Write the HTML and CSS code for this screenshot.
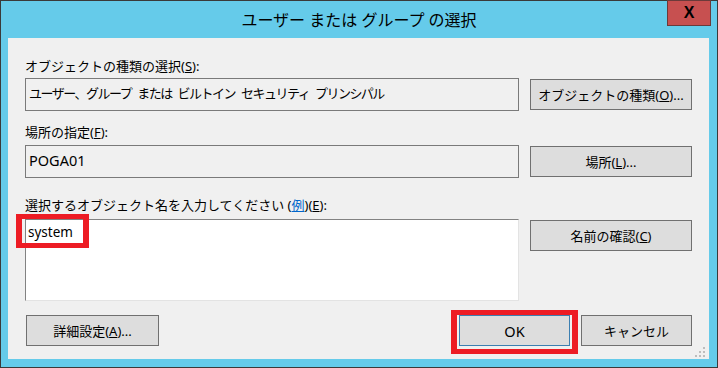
FILE: index.html
```html
<!DOCTYPE html>
<html lang="ja">
<head>
  <meta charset="UTF-8" />
  <title>ユーザー または グループ の選択</title>
  <link rel="stylesheet" href="styles.css">
</head>
<body>
  <div class="window">
    <div class="titlebar">
      <span></span>
      <span class="title">ユーザー または グループ の選択</span>
      <button class="close">X</button>
    </div>

    <div class="content">
      <label class="field-label">オブジェクトの種類の選択(<u>S</u>):</label>
      <div class="row">
        <div class="box box-kana">ユーザー、グループ または ビルトイン セキュリティ プリンシパル</div>
        <button class="btn">オブジェクトの種類(<u>O</u>)...</button>
      </div>

      <label class="field-label second">場所の指定(<u>F</u>):</label>
      <div class="row">
        <div class="box box-latin">POGA01</div>
        <button class="btn">場所(<u>L</u>)...</button>
      </div>

      <label class="field-label third">選択するオブジェクト名を入力してください (<a class="example">例</a>)(<u>E</u>):</label>
      <div class="row row-top">
        <div class="names">
          system
          <span class="mark mark-names"></span>
        </div>
        <button class="btn btn-check">名前の確認(<u>C</u>)</button>
      </div>

      <div class="actions">
        <button class="btn btn-advanced">詳細設定(<u>A</u>)...</button>
        <button class="btn btn-ok">OK<span class="mark mark-ok"></span></button>
        <button class="btn btn-cancel">キャンセル</button>
      </div>

      <svg class="grip" width="10" height="10" viewBox="0 0 10 10">
        <rect x="8" y="0" width="2" height="2" fill="#bdbdbd"/>
        <rect x="4" y="4" width="2" height="2" fill="#bdbdbd"/>
        <rect x="8" y="4" width="2" height="2" fill="#bdbdbd"/>
        <rect x="0" y="8" width="2" height="2" fill="#bdbdbd"/>
        <rect x="4" y="8" width="2" height="2" fill="#bdbdbd"/>
        <rect x="8" y="8" width="2" height="2" fill="#bdbdbd"/>
      </svg>
    </div>
  </div>
</body>
</html>
```

FILE: styles.css
```css
* {
  box-sizing: border-box;
}
body {
  margin: 0;
  font-family: "Noto Sans", "Noto Sans CJK JP", sans-serif;
  font-size: 13px;
  color: #000;
}
.window {
  width: 718px;
  height: 368px;
  border: 1px solid #3a3a3a;
  background: #65cbea;
  display: flex;
  flex-direction: column;
}
.titlebar {
  height: 37px;
  display: grid;
  grid-template-columns: 1fr auto 1fr;
}
.title {
  font-size: 16px;
  line-height: 39px;
  white-space: nowrap;
}
.close {
  justify-self: end;
  align-self: start;
  width: 44px;
  height: 26px;
  margin-right: 6px;
  margin-top: -1px;
  background: #c75050;
  border: 1px solid #6b3a3a;
  font-family: "Liberation Sans", sans-serif;
  font-weight: bold;
  font-size: 16px;
  line-height: 22px;
  padding: 0;
  color: #000;
}
.content {
  flex: 1;
  margin: 0 8px 8px 7px;
  background: #f0f0f0;
  padding: 19px 17px 0 17px;
  position: relative;
}
.field-label {
  display: block;
  line-height: 18px;
  margin-bottom: 3px;
  white-space: nowrap;
}
.field-label.second {
  margin-top: 12px;
  margin-bottom: 4px;
}
.field-label.third {
  margin-top: 18px;
  margin-bottom: 5px;
}
.example {
  color: #0066cc;
  text-decoration: underline;
}
.row {
  display: grid;
  grid-template-columns: 494px 162px;
  gap: 11px;
  align-items: center;
}
.row-top {
  align-items: start;
}
.box {
  height: 33px;
  border: 1px solid #7a7a7a;
  padding: 5px 3px 0;
  line-height: 18px;
  white-space: nowrap;
  overflow: hidden;
}
.box-kana {
  letter-spacing: -1.5px;
  word-spacing: 4px;
}
.box-latin {
  font-size: 14.5px;
}
.btn {
  height: 31px;
  background: #dddddd;
  border: 1px solid #707070;
  font-family: inherit;
  font-size: 13px;
  color: #000;
  padding: 0;
  white-space: nowrap;
}
.names {
  position: relative;
  height: 82px;
  background: #fff;
  border: 1px solid #e3e3e3;
  border-top-color: #828282;
  border-left-color: #828282;
  padding: 3px 2px 0;
  line-height: 18px;
  font-size: 13.5px;
}
.btn-check {
  margin-top: 1px;
}
.actions {
  display: flex;
  gap: 11px;
  margin-top: 14px;
}
.btn-advanced {
  width: 133px;
  margin-left: 1px;
  margin-right: auto;
}
.btn-ok,
.btn-cancel {
  width: 111px;
}
.btn-ok {
  position: relative;
  border-color: #3c7fb1;
  font-size: 14.5px;
}
.mark {
  position: absolute;
  border: solid #ed1c24;
  border-width: 5px 6px;
}
.mark-names {
  left: -10px;
  top: -6px;
  width: 73px;
  height: 34px;
}
.mark-ok {
  left: -9px;
  top: -6px;
  width: 127px;
  height: 44px;
}
.grip {
  position: absolute;
  right: 4px;
  bottom: 2px;
}
```
